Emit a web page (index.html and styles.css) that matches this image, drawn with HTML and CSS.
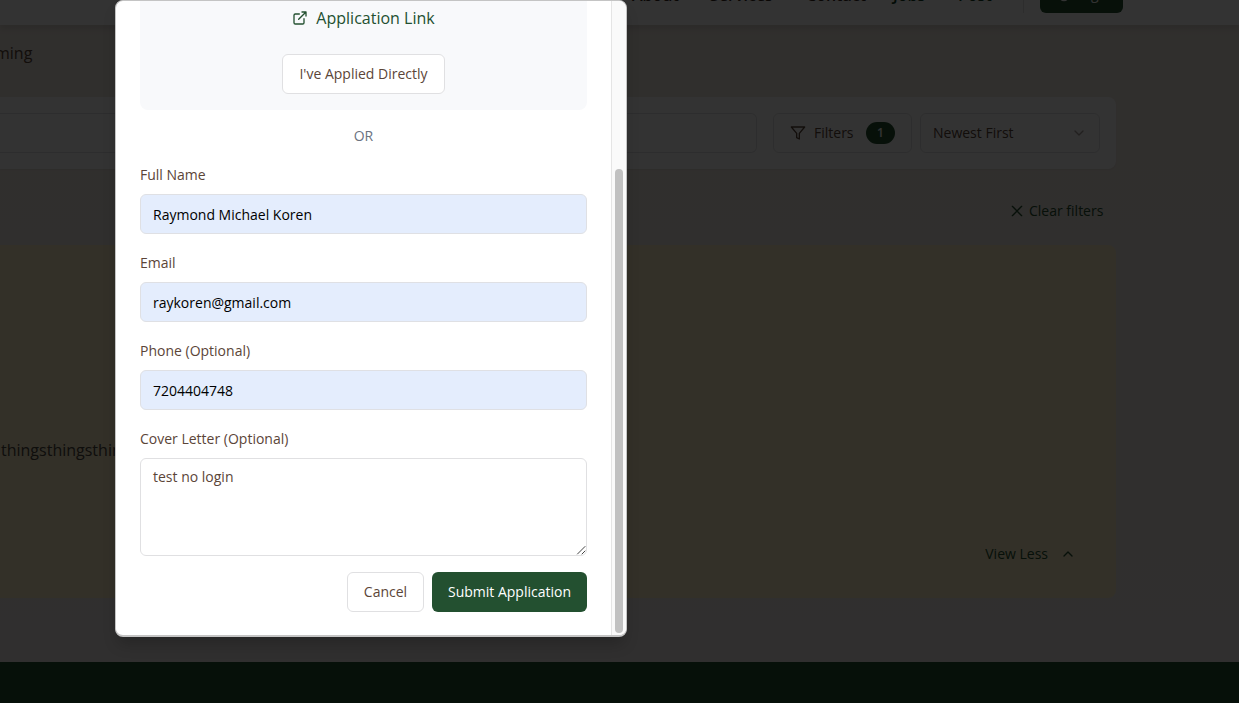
FILE: index.html
```html
<!DOCTYPE html>
<html lang="en">
<head>
<meta charset="utf-8">
<title>Job Application</title>
<link rel="stylesheet" href="styles.css">
</head>
<body>
<div class="page">
  <header class="header">
    <nav class="nav">
      <a class="nav-item home">Home</a>
      <a class="nav-item about">About</a>
      <a class="nav-item services">Services</a>
      <a class="nav-item contact">Contact</a>
      <a class="nav-item green jobs">Jobs</a>
      <a class="nav-item green post">Post</a>
    </nav>
    <a class="login">
      <svg width="16" height="16" viewBox="0 0 24 24"><circle cx="12" cy="7" r="4"/><path d="M7 17a5 5 0 0 0 10 0"/></svg>
      <span>Sign</span>
    </a>
  </header>
  <main class="content">
    <p class="intro">ming</p>
    <section class="toolbar">
      <div class="search"></div>
      <button class="tool filters">
        <svg width="16" height="16" viewBox="0 0 24 24"><path d="M22 3H2l8 9.46V19l4 2v-8.54z"/></svg>
        <span>Filters</span><span class="count">1</span>
      </button>
      <button class="tool sort"><span>Newest First</span>
        <svg class="faint" width="16" height="16" viewBox="0 0 24 24"><path d="m6 9 6 6 6-6"/></svg>
      </button>
    </section>
    <div class="clear">
      <svg width="16" height="16" viewBox="0 0 24 24"><path d="M19 5 5 19M5 5l14 14"/></svg>
      <span>Clear filters</span>
    </div>
    <article class="card">
      <p class="card-text">thingsthingsthings</p>
      <div class="view-less"><span>View Less</span>
        <svg width="16" height="16" viewBox="0 0 24 24"><path d="m18 15-6-6-6 6"/></svg>
      </div>
    </article>
  </main>
  <footer class="footer"></footer>
</div>
<div class="overlay"></div>
<div class="dialog">
  <div class="dialog-body">
    <section class="external">
      <a class="link">
        <svg width="16" height="16" viewBox="0 0 24 24"><path d="M15 3h6v6M10 14 21 3M18 13v6a2 2 0 0 1-2 2H5a2 2 0 0 1-2-2V8a2 2 0 0 1 2-2h6"/></svg>
        <span>Application Link</span>
      </a>
      <button class="btn applied">I've Applied Directly</button>
    </section>
    <div class="or">OR</div>
    <form class="form">
      <label class="field"><span class="label">Full Name</span><span class="input">Raymond Michael Koren</span></label>
      <label class="field"><span class="label">Email</span><span class="input">raykoren@gmail.com</span></label>
      <label class="field"><span class="label">Phone (Optional)</span><span class="input">7204404748</span></label>
      <label class="field"><span class="label">Cover Letter (Optional)</span>
        <span class="textarea">test no login<svg class="grip" width="10" height="10" viewBox="0 0 10 10"><path d="M1.5 9 9 1.5M6 9l3-3"/></svg></span>
      </label>
      <div class="actions">
        <button class="btn cancel" type="button">Cancel</button>
        <button class="btn primary" type="button">Submit Application</button>
      </div>
    </form>
  </div>
  <div class="scrollbar"><div class="thumb"></div></div>
</div>
</body>
</html>
```
FILE: styles.css
```css
* { box-sizing: border-box; }
body { margin: 0; height: 703px; overflow: hidden; position: relative; font: 14px/20px "Open Sans", "Noto Sans", sans-serif; color: #5b4538; }
p { margin: 0; }
button { font: inherit; color: inherit; white-space: nowrap; }
svg { fill: none; stroke: currentColor; stroke-width: 2; stroke-linecap: round; stroke-linejoin: round; flex: none; }

.page { height: 703px; display: flex; flex-direction: column; background: linear-gradient(#f0e8e0, #f1ece9); overflow: hidden; }
.header { height: 25px; flex: none; display: flex; background: #fff; box-shadow: 0 4px 6px rgba(0,0,0,.1); position: relative; }
.nav { display: flex; width: 1024px; border-right: 1px solid #e2e2e2; height: 13px; padding-left: 560px; }
.nav-item { width: 78px; flex: none; font-size: 16px; font-weight: 600; line-height: 24px; margin-top: -17px; color: #33251d; }
.home { width: 72px; }
.about { width: 78px; }
.services { width: 96px; }
.contact { width: 87px; }
.jobs { width: 65px; }
.green { color: #0b3a20; }
.login { display: flex; align-items: center; justify-content: center; gap: 8px; width: 83px; height: 40px; margin: -27px 0 0 16px; padding-top: 2px; border-radius: 6px; background: #235030; color: #fff; font-weight: 500; }

.content { flex: 1; display: flex; flex-direction: column; }
.intro { font-size: 16px; line-height: 24px; margin-top: 16px; margin-left: -5px; color: #5b4538; }
.toolbar { width: 1116px; height: 72px; margin-top: 32px; padding: 16px; display: flex; background: #fff; border-radius: 0 8px 8px 0; box-shadow: 0 1px 2px rgba(0,0,0,.06); }
.search { width: 757px; margin-left: -16px; border: 1px solid #e2e2e5; border-left: 0; border-radius: 0 6px 6px 0; }
.tool { display: flex; align-items: center; background: #fff; border: 1px solid #e2e2e5; border-radius: 6px; padding: 0 16px; height: 40px; }
.filters { width: 139px; margin-left: 16px; gap: 8px; }
.count { margin-left: auto; width: 29px; height: 22px; border-radius: 11px; background: #235030; color: #fff; font-size: 12px; font-weight: 600; line-height: 22px; text-align: center; }
.sort { width: 180px; margin-left: 8px; padding: 0 12px; justify-content: space-between; }
.faint { opacity: .5; }
.clear { display: flex; align-items: center; gap: 4px; margin: 32px 0 0 1009px; color: #235030; }
.card { width: 1116px; height: 353px; margin-top: 24px; padding: 193px 40px 34px 1px; display: flex; flex-direction: column; justify-content: space-between; background: #fdeec8; border-radius: 0 8px 8px 0; color: #235030; }
.card-text { font-size: 16px; line-height: 24px; color: #4c463e; }
.view-less { display: flex; justify-content: flex-end; align-items: center; gap: 12px; }
.footer { height: 41px; flex: none; background: #1e5030; }
.overlay { position: absolute; inset: 0; background: rgba(0,0,0,.8); }

.dialog { position: absolute; left: 115px; top: 0; width: 512px; height: 637px; display: flex; background: #fff; border: 1px solid #c4c4c4; border-width: 1px 1px 2px; border-radius: 8px; overflow: hidden; box-shadow: 0 10px 15px -3px rgba(0,0,0,.2); }
.dialog-body { width: 495px; padding: 0 24px; }
.external { height: 109px; background: #f8f9fb; border-radius: 0 0 8px 8px; display: flex; flex-direction: column; align-items: center; padding-top: 5px; }
.link { display: flex; align-items: center; gap: 8px; font-size: 16px; line-height: 24px; color: #235030; }
.btn { height: 40px; border: 1px solid #e0e0e2; border-radius: 6px; background: #fff; padding: 0; }
.applied { width: 163px; margin-top: 24px; }
.or { text-align: center; margin: 16px 0 22px; color: #6b7280; }
.form { display: flex; flex-direction: column; gap: 16px; }
.field { display: flex; flex-direction: column; }
.label { line-height: 14px; margin-bottom: 12px; height: 14px; }
.field + .field { margin-top: 6px; }
.input { height: 40px; border: 1px solid #dfe0e4; border-radius: 6px; background: #e4edfd; color: #000; padding: 10px 12px 8px; }
.textarea { position: relative; height: 98px; border: 1px solid #e0e0e2; border-radius: 6px; padding: 8px 12px; }
.grip { position: absolute; right: 0; bottom: 0; stroke-width: 1; color: #444; }
.actions { display: flex; justify-content: flex-end; gap: 8px; }
.cancel { width: 77px; }
.primary { width: 155px; background: #235030; border: 0; color: #fff; }
.scrollbar { width: 15px; background: #fafafa; border-left: 1px solid #e5e5e5; padding: 168px 3px 0; }
.thumb { width: 8px; height: 464px; border-radius: 4px; background: #c1c1c1; }
```
